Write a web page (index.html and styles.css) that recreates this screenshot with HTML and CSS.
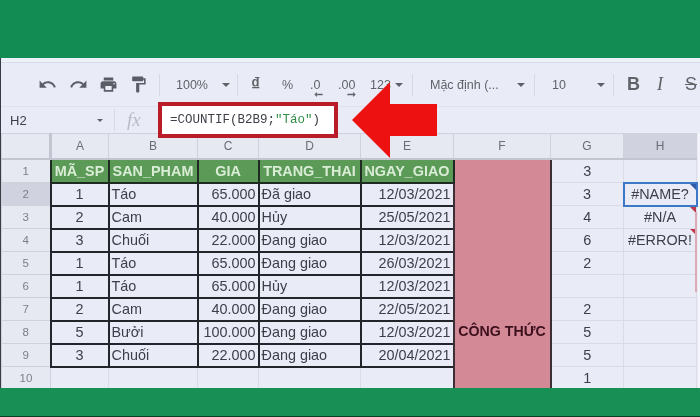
FILE: index.html
```html
<!DOCTYPE html>
<html lang="vi">
<head>
    <meta charset="UTF-8">
    <title>COUNTIF</title>
    <link rel="stylesheet" href="styles.css">
</head>
<body>

<div class="band-top"></div>

<div class="app">
    <!-- toolbar -->
    <div class="toolbar">
        <svg class="icon icon-undo" viewBox="0 0 24 24"><path d="M12.5 8c-2.65 0-5.05.99-6.9 2.6L2 7v9h9l-3.62-3.62c1.39-1.16 3.16-1.88 5.12-1.88 3.54 0 6.55 2.31 7.6 5.5l2.37-.78C21.08 11.03 17.15 8 12.5 8z"/></svg>
        <svg class="icon icon-redo" viewBox="0 0 24 24"><path d="M18.4 10.6C16.55 8.99 14.15 8 11.5 8c-4.65 0-8.58 3.03-9.96 7.22L3.9 16c1.05-3.19 4.05-5.5 7.6-5.5 1.95 0 3.73.72 5.12 1.88L13 16h9V7l-3.6 3.6z"/></svg>
        <svg class="icon icon-print" viewBox="0 0 24 24"><path d="M19 8H5c-1.66 0-3 1.34-3 3v6h4v4h12v-4h4v-6c0-1.66-1.34-3-3-3zm-3 11H8v-5h8v5zm3-7c-.55 0-1-.45-1-1s.45-1 1-1 1 .45 1 1-.45 1-1 1zm-1-9H6v4h12V3z"/></svg>
        <svg class="icon icon-paint" viewBox="0 0 24 24"><path d="M18 4V3c0-.55-.45-1-1-1H5c-.55 0-1 .45-1 1v4c0 .55.45 1 1 1h12c.55 0 1-.45 1-1V6h1v4H9v11c0 .55.45 1 1 1h2c.55 0 1-.45 1-1v-9h8V4h-3z"/></svg>
        <span class="sep sep-a"></span>
        <span class="tool-text zoom">100%</span>
        <span class="caret caret-zoom"></span>
        <span class="sep sep-b"></span>
        <span class="tool-text currency">₫</span>
        <span class="tool-text percent">%</span>
        <span class="tool-text dec dec-less">.0<svg class="dec-arrow" viewBox="0 0 10 6"><path d="M0 3l3-3v2h7v2H3v2z"/></svg></span>
        <span class="tool-text dec dec-more">.00<svg class="dec-arrow dec-arrow-r" viewBox="0 0 10 6"><path d="M10 3L7 0v2H0v2h7v2z"/></svg></span>
        <span class="tool-text numfmt">123</span>
        <span class="caret caret-num"></span>
        <span class="sep sep-c"></span>
        <span class="tool-text font">Mặc định (...</span>
        <span class="caret caret-font"></span>
        <span class="sep sep-d"></span>
        <span class="tool-text size">10</span>
        <span class="caret caret-size"></span>
        <span class="sep sep-e"></span>
        <span class="tool-text bold">B</span>
        <span class="tool-text italic">I</span>
        <span class="tool-text strike">S</span>
    </div>

    <!-- formula bar -->
    <div class="formula-bar">
        <span class="cell-name">H2</span>
        <span class="caret caret-name"></span>
        <span class="sep sep-name"></span>
        <span class="fx">fx</span>
        <div class="formula-box">=COUNTIF(B2B9;<span class="str">"Táo"</span>)</div>
    </div>

    <!-- sheet -->
    <table class="sheet">
        <colgroup>
            <col class="c-head"><col class="c-a"><col class="c-b"><col class="c-c"><col class="c-d">
            <col class="c-e"><col class="c-f"><col class="c-g"><col class="c-h">
        </colgroup>
        <thead>
            <tr class="col-row">
                <th class="corner"></th><th>A</th><th>B</th><th>C</th><th>D</th><th>E</th><th>F</th><th>G</th><th class="active-head">H</th>
            </tr>
        </thead>
        <tbody>
            <tr class="row-first">
                <th>1</th>
                <td class="title">MÃ_SP</td><td class="title">SAN_PHAM</td><td class="title">GIA</td><td class="title">TRANG_THAI</td><td class="title">NGAY_GIAO</td>
                <td class="merged" rowspan="10">CÔNG THỨC</td>
                <td class="mid">3</td><td></td>
            </tr>
            <tr>
                <th class="active-head">2</th>
                <td class="data mid">1</td><td class="data">Táo</td><td class="data num">65.000</td><td class="data">Đã giao</td><td class="data num">12/03/2021</td>
                <td class="mid">3</td><td class="mid selected">#NAME?<i class="mark mark-blue"></i></td>
            </tr>
            <tr>
                <th>3</th>
                <td class="data mid">2</td><td class="data">Cam</td><td class="data num">40.000</td><td class="data">Hủy</td><td class="data num">25/05/2021</td>
                <td class="mid">4</td><td class="mid err">#N/A<i class="mark"></i></td>
            </tr>
            <tr>
                <th>4</th>
                <td class="data mid">3</td><td class="data">Chuối</td><td class="data num">22.000</td><td class="data">Đang giao</td><td class="data num">12/03/2021</td>
                <td class="mid">6</td><td class="mid err">#ERROR!<i class="mark"></i></td>
            </tr>
            <tr>
                <th>5</th>
                <td class="data mid">1</td><td class="data">Táo</td><td class="data num">65.000</td><td class="data">Đang giao</td><td class="data num">26/03/2021</td>
                <td class="mid">2</td><td></td>
            </tr>
            <tr>
                <th>6</th>
                <td class="data mid">1</td><td class="data">Táo</td><td class="data num">65.000</td><td class="data">Hủy</td><td class="data num">12/03/2021</td>
                <td></td><td></td>
            </tr>
            <tr>
                <th>7</th>
                <td class="data mid">2</td><td class="data">Cam</td><td class="data num">40.000</td><td class="data">Đang giao</td><td class="data num">22/05/2021</td>
                <td class="mid">2</td><td></td>
            </tr>
            <tr>
                <th>8</th>
                <td class="data mid">5</td><td class="data">Bưởi</td><td class="data num">100.000</td><td class="data">Đang giao</td><td class="data num">12/03/2021</td>
                <td class="mid">5</td><td></td>
            </tr>
            <tr>
                <th>9</th>
                <td class="data mid">3</td><td class="data">Chuối</td><td class="data num">22.000</td><td class="data">Đang giao</td><td class="data num">20/04/2021</td>
                <td class="mid">5</td><td></td>
            </tr>
            <tr>
                <th>10</th>
                <td></td><td></td><td></td><td></td><td></td>
                <td class="mid">1</td><td></td>
            </tr>
        </tbody>
    </table>
</div>

<div class="band-bottom"></div>

<!-- red arrow over the sheet -->
<svg class="arrow" viewBox="0 0 90 80"><path d="M0 38L38 0V22H85V54H38V76z"/></svg>
<!-- faint red mark by the right edge -->
<div class="edge-mark"></div>

</body>
</html>
```

FILE: styles.css
```css
* {
    margin: 0;
    padding: 0;
    box-sizing: border-box;
}
body {
    width: 700px;
    height: 417px;
    overflow: hidden;
    position: relative;
    display: flex;
    flex-direction: column;
    background: #eef0f8;
    font-family: "Liberation Sans", Arial, sans-serif;
    color: #3c3f48;
}
.band-top {
    height: 58px;
    background: #128c53;
    flex: none;
}
.band-bottom {
    height: 29px;
    background: #178f55;
    border-bottom: 1px solid #0c3f28;
    flex: none;
}
.app {
    height: 330px;
    flex: none;
    overflow: hidden;
    background: #e9ecf7;
    border-left: 1px solid #3a3c44;
    filter: blur(0.4px);
}

/* toolbar */
.toolbar {
    height: 49px;
    padding-top: 5px;
    display: flex;
    align-items: center;
    border-bottom: 1px solid #dfe1ec;
    position: relative;
    background: linear-gradient(#eef0f8 0 4px, #d9dce9 4px 5px, #e9ecf7 5px);
    color: #5f6368;
}
.icon {
    width: 19px;
    height: 19px;
    fill: #5a5d66;
    flex: none;
}
.icon-undo { margin-left: 37px; }
.icon-redo { margin-left: 12px; }
.icon-print { margin-left: 11px; }
.icon-paint { margin-left: 11px; }
.sep {
    width: 1px;
    height: 22px;
    background: #d6d8e3;
    flex: none;
}
.sep-a { margin-left: 11px; }
.tool-text {
    font-size: 12.5px;
    flex: none;
    white-space: nowrap;
}
.zoom { margin-left: 16px; width: 32px; }
.caret {
    width: 0;
    height: 0;
    border-left: 4.5px solid transparent;
    border-right: 4.5px solid transparent;
    border-top: 4.5px solid #5f6368;
    flex: none;
}
.caret-zoom { margin-left: 14px; }
.sep-b { margin-left: 7px; }
.currency { margin-left: 13px; font-size: 18px; font-weight: bold; width: 14px; }
.percent { margin-left: 17px; width: 14px; }
.dec {
    position: relative;
    font-size: 12.5px;
}
.dec-less { margin-left: 14px; width: 16px; }
.dec-more { margin-left: 12px; width: 24px; }
.dec-arrow {
    position: absolute;
    left: 4px;
    top: 14px;
    width: 9px;
    height: 5px;
    fill: #5f6368;
}
.dec-arrow-r { left: 9px; }
.numfmt { margin-left: 8px; width: 25px; }
.caret-num { margin-left: 0; }
.sep-c { margin-left: 9px; }
.font { margin-left: 17px; width: 73px; }
.caret-font { margin-left: 14px; }
.sep-d { margin-left: 9px; }
.size { margin-left: 17px; width: 16px; }
.caret-size { margin-left: 29px; }
.sep-e { margin-left: 8px; }
.bold { margin-left: 13px; font-size: 18px; font-weight: bold; width: 14px; }
.italic { margin-left: 16px; font-size: 18px; font-style: italic; font-family: "Liberation Serif", serif; width: 10px; }
.strike { margin-left: 18px; font-size: 18px; text-decoration: line-through; }

/* formula bar */
.formula-bar {
    height: 26px;
    display: flex;
    align-items: center;
    position: relative;
}
.cell-name {
    margin-left: 9px;
    width: 87px;
    font-size: 13px;
}
.caret-name {
    border-left-width: 3.5px;
    border-right-width: 3.5px;
    border-top-width: 3.5px;
}
.sep-name { margin-left: 11px; }
.fx {
    margin-left: 12px;
    width: 31px;
    font-family: "Liberation Serif", serif;
    font-style: italic;
    font-size: 19px;
    color: #b9bcc6;
}
.formula-box {
    width: 180px;
    height: 36px;
    flex: none;
    display: flex;
    align-items: center;
    padding-left: 8px;
    background: #fff;
    border: 4px solid #b91c27;
    font-family: "Liberation Mono", monospace;
    font-size: 12.5px;
    color: #3c3f48;
    white-space: pre;
}
.str { color: #2f8f46; }

/* sheet */
.sheet {
    table-layout: fixed;
    width: 695px;
    border-collapse: collapse;
    font-size: 14.4px;
    box-shadow: 4px 0 0 #f4f5fb;
}
.c-head { width: 49px; }
.c-a { width: 58px; }
.c-b { width: 89px; }
.c-c { width: 61px; }
.c-d { width: 102px; }
.c-e { width: 93px; }
.c-f { width: 97px; }
.c-g { width: 73px; }
.c-h { width: 73px; }
.sheet tr { height: 23px; }
.sheet .row-first { height: 24px; }
.sheet .col-row { height: 25px; }
.sheet th {
    background: #e6e8f2;
    border: 1px solid #cfd2dd;
    font-weight: normal;
    font-size: 11.5px;
    color: #7c7f88;
}
.sheet .col-row th {
    font-size: 12px;
    color: #6a6d76;
    border-bottom: 2px solid #c3c6d1;
}
.sheet .corner {
    border-right: 3px solid #c3c6d1;
    border-bottom: 3px solid #c3c6d1;
}
.sheet .active-head { background: #d0d3df; }
.sheet td {
    border: 1px solid #d9dbe6;
    padding: 0 2px;
    white-space: nowrap;
    overflow: hidden;
}
.sheet .title {
    background: #5c9b57;
    border: 2px solid #1f2a22;
    border-top: 0;
    color: #d9ecd6;
    font-weight: bold;
    text-align: center;
    padding: 0;
}
.sheet .data { border: 2px solid #23252b; }
.mid { text-align: center; }
.num { text-align: right; }
.sheet .merged {
    background: #d48a96;
    border: 2px solid #3a2f36;
    border-top: 0;
    text-align: center;
    vertical-align: bottom;
    padding: 0 0 50px;
    font-weight: bold;
    font-size: 14.2px;
    color: #3b0f1c;
}
.sheet .selected {
    border: 2px solid #3b78c6;
    position: relative;
    overflow: visible;
}
.err { position: relative; }
.mark {
    position: absolute;
    top: 0;
    right: 0;
    width: 0;
    height: 0;
    border-left: 6px solid transparent;
    border-top: 6px solid #c0394a;
}
.mark-blue { border-top-color: #2f5aa8; }

/* arrow */
.arrow {
    position: absolute;
    left: 352px;
    top: 82px;
    width: 90px;
    height: 80px;
    fill: #ee1111;
    filter: blur(0.4px);
}
.edge-mark {
    position: absolute;
    left: 695px;
    top: 212px;
    width: 2px;
    height: 80px;
    background: #dcaab4;
}
```
